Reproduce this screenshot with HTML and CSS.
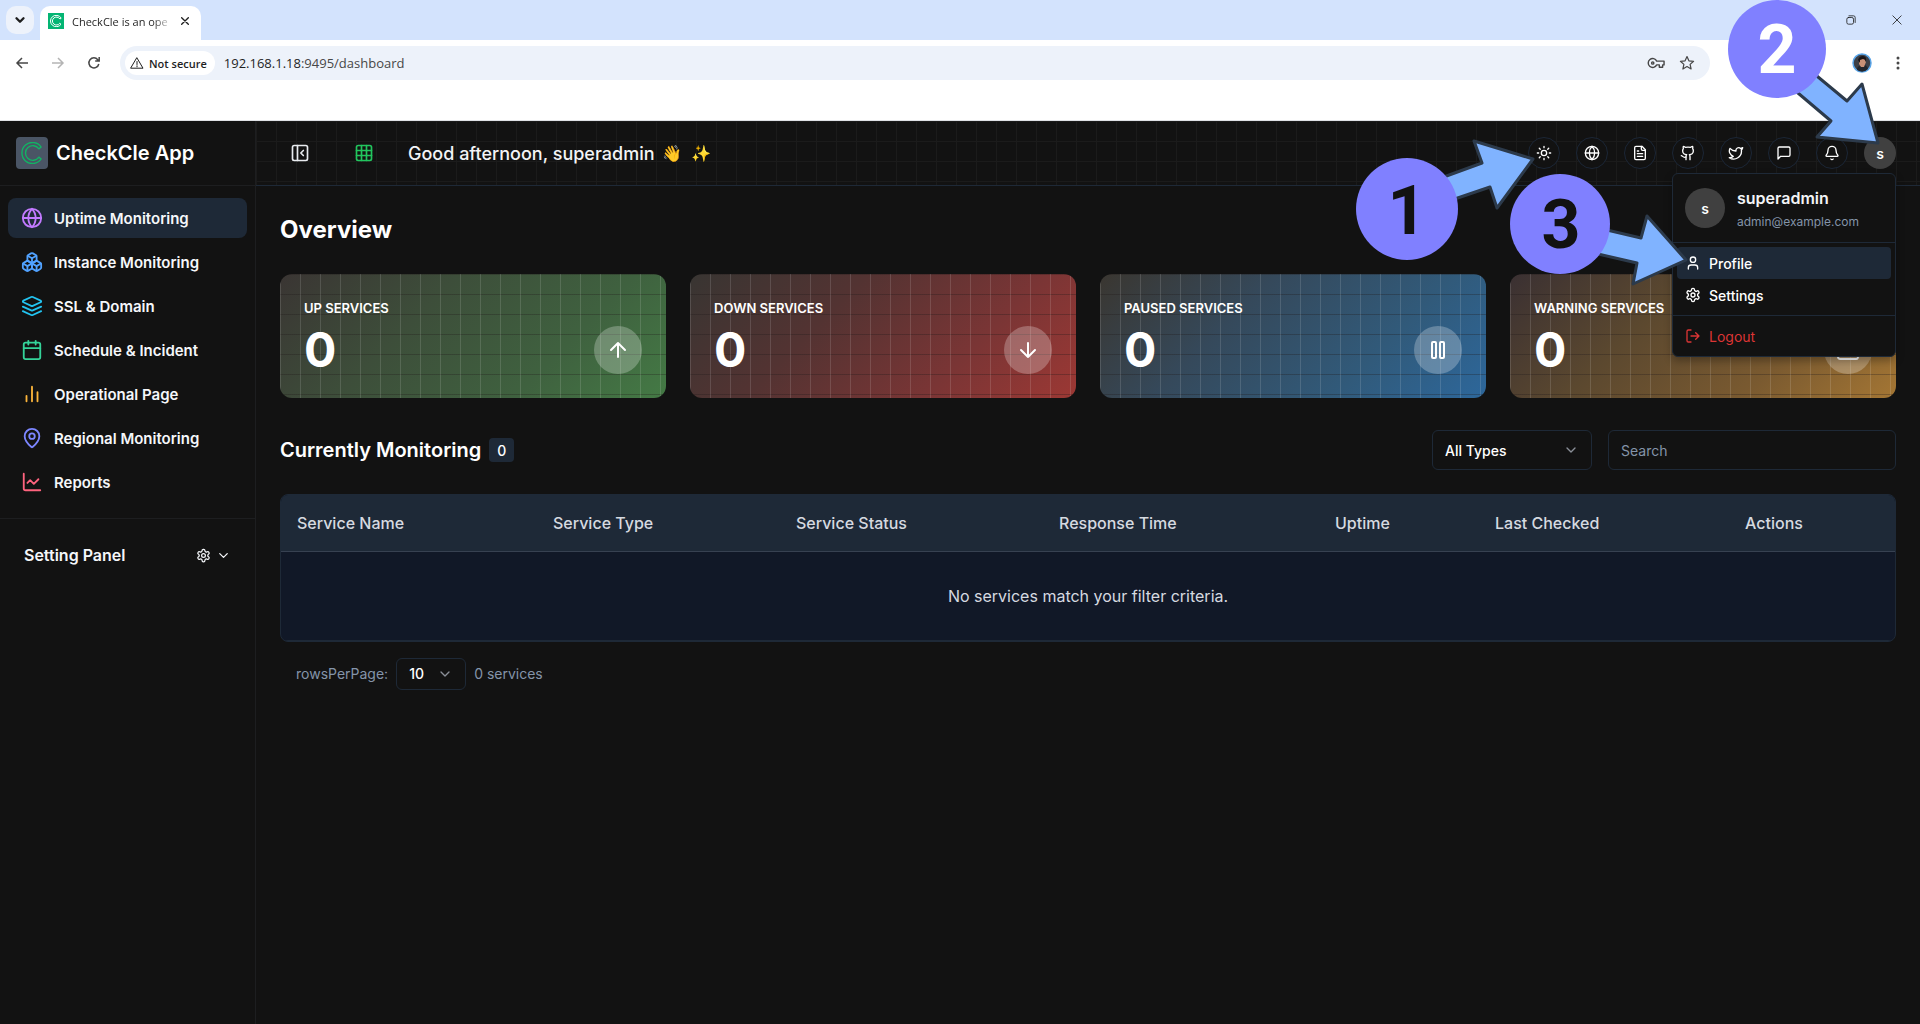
FILE: index.html
```html
<!DOCTYPE html>
<html lang="en">
<head>
<meta charset="utf-8">
<title>CheckCle App</title>
<link rel="stylesheet" href="styles.css">
</head>
<body>
<svg class="defs" aria-hidden="true">
  <symbol id="i-globe" viewBox="0 0 24 24"><circle cx="12" cy="12" r="10"/><path d="M12 2a14.5 14.5 0 0 0 0 20 14.5 14.5 0 0 0 0-20M2 12h20"/></symbol>
  <symbol id="i-boxes" viewBox="0 0 24 24"><path d="M2.97 12.92A2 2 0 0 0 2 14.63v3.24a2 2 0 0 0 .97 1.71l3 1.8a2 2 0 0 0 2.06 0L12 19v-5.5l-5-3-4.03 2.42Z"/><path d="m7 16.5-4.74-2.85M7 16.5l5-3M7 16.5v5.17"/><path d="M12 13.5V19l3.97 2.38a2 2 0 0 0 2.06 0l3-1.8a2 2 0 0 0 .97-1.71v-3.24a2 2 0 0 0-.97-1.71L17 10.5l-5 3Z"/><path d="m17 16.5-5-3M17 16.5l4.74-2.85M17 16.5v5.17"/><path d="M7.97 4.42A2 2 0 0 0 7 6.13v4.37l5 3 5-3V6.13a2 2 0 0 0-.97-1.71l-3-1.8a2 2 0 0 0-2.06 0l-3 1.8Z"/><path d="M12 8 7.26 5.15M12 8l4.74-2.85M12 13.5V8"/></symbol>
  <symbol id="i-layers" viewBox="0 0 24 24"><path d="M12.83 2.18a2 2 0 0 0-1.66 0L2.6 6.08a1 1 0 0 0 0 1.83l8.58 3.91a2 2 0 0 0 1.66 0l8.58-3.9a1 1 0 0 0 0-1.83Z"/><path d="m22 17.65-9.17 4.16a2 2 0 0 1-1.66 0L2 17.65"/><path d="m22 12.65-9.17 4.16a2 2 0 0 1-1.66 0L2 12.65"/></symbol>
  <symbol id="i-calendar" viewBox="0 0 24 24"><path d="M8 2v4M16 2v4M3 10h18"/><rect x="3" y="4" width="18" height="18" rx="2"/></symbol>
  <symbol id="i-bars" viewBox="0 0 24 24"><path d="M18 20V10M12 20V4M6 20v-6"/></symbol>
  <symbol id="i-pin" viewBox="0 0 24 24"><path d="M20 10c0 4.993-5.539 10.193-7.399 11.799a1 1 0 0 1-1.202 0C9.539 20.193 4 14.993 4 10a8 8 0 0 1 16 0"/><circle cx="12" cy="10" r="3"/></symbol>
  <symbol id="i-line" viewBox="0 0 24 24"><path d="M3 3v16a2 2 0 0 0 2 2h16"/><path d="m19 9-5 5-4-4-3 3"/></symbol>
  <symbol id="i-gear" viewBox="0 0 24 24"><path d="M12.22 2h-.44a2 2 0 0 0-2 2v.18a2 2 0 0 1-1 1.73l-.43.25a2 2 0 0 1-2 0l-.15-.08a2 2 0 0 0-2.73.73l-.22.38a2 2 0 0 0 .73 2.73l.15.1a2 2 0 0 1 1 1.72v.51a2 2 0 0 1-1 1.74l-.15.09a2 2 0 0 0-.73 2.73l.22.38a2 2 0 0 0 2.73.73l.15-.08a2 2 0 0 1 2 0l.43.25a2 2 0 0 1 1 1.73V20a2 2 0 0 0 2 2h.44a2 2 0 0 0 2-2v-.18a2 2 0 0 1 1-1.73l.43-.25a2 2 0 0 1 2 0l.15.08a2 2 0 0 0 2.73-.73l.22-.39a2 2 0 0 0-.73-2.73l-.15-.08a2 2 0 0 1-1-1.74v-.5a2 2 0 0 1 1-1.74l.15-.09a2 2 0 0 0 .73-2.73l-.22-.38a2 2 0 0 0-2.73-.73l-.15.08a2 2 0 0 1-2 0l-.43-.25a2 2 0 0 1-1-1.73V4a2 2 0 0 0-2-2z"/><circle cx="12" cy="12" r="3"/></symbol>
  <symbol id="i-chevron" viewBox="0 0 24 24"><path d="m6 9 6 6 6-6"/></symbol>
  <symbol id="i-panel" viewBox="0 0 24 24"><rect x="3" y="3" width="18" height="18" rx="2"/><path d="M9 3v18M16 15l-3-3 3-3"/></symbol>
  <symbol id="i-grid" viewBox="0 0 24 24"><rect x="3" y="3" width="18" height="18" rx="2"/><path d="M3 9h18M3 15h18M9 3v18M15 3v18"/></symbol>
  <symbol id="i-sun" viewBox="0 0 24 24"><circle cx="12" cy="12" r="4"/><path d="M12 2v2M12 20v2M4.93 4.93l1.41 1.41M17.66 17.66l1.41 1.41M2 12h2M20 12h2M6.34 17.66l-1.41 1.41M19.07 4.93l-1.41 1.41"/></symbol>
  <symbol id="i-file" viewBox="0 0 24 24"><path d="M15 2H6a2 2 0 0 0-2 2v16a2 2 0 0 0 2 2h12a2 2 0 0 0 2-2V7Z"/><path d="M14 2v4a2 2 0 0 0 2 2h4M10 9H8M16 13H8M16 17H8"/></symbol>
  <symbol id="i-github" viewBox="0 0 24 24"><path d="M15 22v-4a4.8 4.8 0 0 0-1-3.5c3 0 6-2 6-5.5.08-1.25-.27-2.48-1-3.5.28-1.15.28-2.35 0-3.5 0 0-1 0-3 1.5-2.64-.5-5.36-.5-8 0C6 2 5 2 5 2c-.3 1.15-.3 2.35 0 3.5A5.403 5.403 0 0 0 4 9c0 3.5 3 5.5 6 5.5-.39.49-.68 1.05-.85 1.65-.17.6-.22 1.23-.15 1.85v4"/><path d="M9 18c-4.51 2-5-2-7-2"/></symbol>
  <symbol id="i-twitter" viewBox="0 0 24 24"><path d="M22 4s-.7 2.1-2 3.4c1.6 10-9.4 17.3-18 11.6 2.2.1 4.4-.6 6-2C3 15.5.5 9.6 3 5c2.2 2.6 5.6 4.1 9 4-.9-4.2 4-6.6 7-3.8 1.1 0 3-1.2 3-1.2z"/></symbol>
  <symbol id="i-message" viewBox="0 0 24 24"><path d="M21 15a2 2 0 0 1-2 2H7l-4 4V5a2 2 0 0 1 2-2h14a2 2 0 0 1 2 2z"/></symbol>
  <symbol id="i-bell" viewBox="0 0 24 24"><path d="M10.268 21a2 2 0 0 0 3.464 0"/><path d="M3.262 15.326A1 1 0 0 0 4 17h16a1 1 0 0 0 .74-1.673C19.41 13.956 18 12.499 18 8A6 6 0 0 0 6 8c0 4.499-1.411 5.956-2.738 7.326"/></symbol>
  <symbol id="i-user" viewBox="0 0 24 24"><path d="M19 21v-2a4 4 0 0 0-4-4H9a4 4 0 0 0-4 4v2"/><circle cx="12" cy="7" r="4"/></symbol>
  <symbol id="i-logout" viewBox="0 0 24 24"><path d="M9 21H5a2 2 0 0 1-2-2V5a2 2 0 0 1 2-2h4M16 17l5-5-5-5M21 12H9"/></symbol>
  <symbol id="i-up" viewBox="0 0 24 24"><path d="m5 12 7-7 7 7M12 19V5"/></symbol>
  <symbol id="i-down" viewBox="0 0 24 24"><path d="M12 5v14M19 12l-7 7-7-7"/></symbol>
  <symbol id="i-pause" viewBox="0 0 24 24"><rect x="14" y="4" width="4" height="16" rx="1"/><rect x="6" y="4" width="4" height="16" rx="1"/></symbol>
  <symbol id="i-alert" viewBox="0 0 24 24"><path d="m21.73 18-8-14a2 2 0 0 0-3.48 0l-8 14A2 2 0 0 0 4 21h16a2 2 0 0 0 1.73-3M12 9v4M12 17h.01"/></symbol>
  <symbol id="i-close" viewBox="0 0 12 12"><path d="m1 1 10 10M11 1 1 11"/></symbol>
  <symbol id="i-logo" viewBox="0 0 24 24"><path d="M22 5.500A11.500 11.500 0 1 0 22 18.500L19.500 16.500A8 8 0 1 1 19.500 7.500Z"/></symbol>
</svg>

<div class="browser">
  <div class="tabstrip">
    <button class="tab-search" aria-label="Search tabs"><svg class="icon"><use href="#i-chevron"/></svg></button>
    <div class="tab">
      <span class="favicon"><svg class="icon"><use href="#i-logo"/></svg></span>
      <span class="tab-title">CheckCle is an ope</span>
      <button class="tab-close" aria-label="Close tab"><svg class="icon"><use href="#i-close"/></svg></button>
    </div>
    <div class="window-buttons">
      <button aria-label="Restore"><svg class="icon" viewBox="0 0 12 12"><rect x="1" y="3" width="8" height="8" rx="2"/><path d="M3.500 1H9a2 2 0 0 1 2 2v6"/></svg></button>
      <button aria-label="Close window"><svg class="icon"><use href="#i-close"/></svg></button>
    </div>
  </div>
  <div class="toolbar">
    <button aria-label="Back"><svg class="icon" viewBox="0 0 12 12"><path d="M12 6H1M6 1 1 6l5 5"/></svg></button>
    <button class="faded" aria-label="Forward"><svg class="icon" viewBox="0 0 12 12"><path d="M0 6h11M6 1l5 5-5 5"/></svg></button>
    <button aria-label="Reload"><svg class="icon" viewBox="0 0 12 12"><path d="M10.800 7A5 5 0 1 1 9.800 2.700L11.200 4M11.200 0v4h-4"/></svg></button>
    <div class="omnibox">
      <button class="not-secure"><svg class="icon" viewBox="0 0 14 12"><path d="M7 1 13 11.200H1ZM7 4.500v3M7 8.800v1"/></svg>Not secure</button>
      <span class="url"><span>192.168.1.18</span>:9495/dashboard</span>
      <svg class="icon key" viewBox="0 0 18 12"><path d="M9.200 4A4.700 4.700 0 1 0 9.200 8H12v2.500h3.500V8H17V4Z"/><circle cx="5" cy="6" r="1.200"/></svg>
      <svg class="icon star" viewBox="0 0 16 16"><path d="m8 1.500 1.900 4.300 4.700.5-3.500 3.100 1 4.600L8 11.600 3.900 14l1-4.600L1.400 6.300l4.700-.5Z"/></svg>
    </div>
    <svg class="profile" viewBox="0 0 20 20"><circle cx="10" cy="10" r="9" fill="#3d3f46" stroke="#5aa5e8" stroke-width="1.500"/><path d="M5 17q0-4 3-4l5-1q3 2 3 4-5 5-11 1Z" fill="#22252c"/><path d="M7 6q3-3 6 0l1 3-2 5H9L7 11Z" fill="#c99076"/><path d="M6 7q1-4 5-4 4 0 3 6-1-3-3-3L8 7v3Z" fill="#1b1617"/></svg>
    <button class="menu-dots" aria-label="Menu"><svg viewBox="0 0 4 16"><circle cx="2" cy="3" r="1.500"/><circle cx="2" cy="8" r="1.500"/><circle cx="2" cy="13" r="1.500"/></svg></button>
  </div>
  <div class="bookmarks"></div>
</div>

<div class="app">
  <aside class="sidebar">
    <div class="brand"><span class="brand-logo"><svg class="icon"><use href="#i-logo"/></svg></span><span>CheckCle App</span></div>
    <nav class="nav">
      <a class="active purple" href="#"><svg class="icon"><use href="#i-globe"/></svg><span>Uptime Monitoring</span></a>
      <a class="blue" href="#"><svg class="icon"><use href="#i-boxes"/></svg><span>Instance Monitoring</span></a>
      <a class="cyan" href="#"><svg class="icon"><use href="#i-layers"/></svg><span>SSL &amp; Domain</span></a>
      <a class="green" href="#"><svg class="icon"><use href="#i-calendar"/></svg><span>Schedule &amp; Incident</span></a>
      <a class="amber" href="#"><svg class="icon"><use href="#i-bars"/></svg><span>Operational Page</span></a>
      <a class="indigo" href="#"><svg class="icon"><use href="#i-pin"/></svg><span>Regional Monitoring</span></a>
      <a class="rose" href="#"><svg class="icon"><use href="#i-line"/></svg><span>Reports</span></a>
    </nav>
    <button class="setting-panel"><span>Setting Panel</span><svg class="icon"><use href="#i-gear"/></svg><svg class="icon"><use href="#i-chevron"/></svg></button>
  </aside>

  <div class="content">
    <header class="header">
      <button class="plain" aria-label="Collapse sidebar"><svg class="icon"><use href="#i-panel"/></svg></button>
      <button class="plain lime" aria-label="Toggle grid"><svg class="icon"><use href="#i-grid"/></svg></button>
      <div class="greeting"><span>Good afternoon, superadmin</span><span>👋</span><span>✨</span></div>
      <div class="actions">
        <button aria-label="Theme"><svg class="icon"><use href="#i-sun"/></svg></button>
        <button aria-label="Language"><svg class="icon"><use href="#i-globe"/></svg></button>
        <button aria-label="Docs"><svg class="icon"><use href="#i-file"/></svg></button>
        <button aria-label="GitHub"><svg class="icon"><use href="#i-github"/></svg></button>
        <button aria-label="Twitter"><svg class="icon"><use href="#i-twitter"/></svg></button>
        <button aria-label="Chat"><svg class="icon"><use href="#i-message"/></svg></button>
        <button aria-label="Notifications"><svg class="icon"><use href="#i-bell"/></svg></button>
        <button class="avatar">s</button>
        <div class="menu">
          <div class="menu-user">
            <span class="avatar large">s</span>
            <div class="menu-text"><div class="menu-name">superadmin</div><div class="menu-mail">admin@example.com</div></div>
          </div>
          <div class="menu-group">
            <button class="selected"><svg class="icon"><use href="#i-user"/></svg>Profile</button>
            <button><svg class="icon"><use href="#i-gear"/></svg>Settings</button>
          </div>
          <div class="menu-group">
            <button class="logout"><svg class="icon"><use href="#i-logout"/></svg>Logout</button>
          </div>
        </div>
      </div>
    </header>

    <main class="main">
      <h1>Overview</h1>
      <section class="stats">
        <article class="stat up"><h2>UP SERVICES</h2><div class="stat-row"><strong>0</strong><span class="stat-icon"><svg class="icon"><use href="#i-up"/></svg></span></div></article>
        <article class="stat down"><h2>DOWN SERVICES</h2><div class="stat-row"><strong>0</strong><span class="stat-icon"><svg class="icon"><use href="#i-down"/></svg></span></div></article>
        <article class="stat paused"><h2>PAUSED SERVICES</h2><div class="stat-row"><strong>0</strong><span class="stat-icon"><svg class="icon"><use href="#i-pause"/></svg></span></div></article>
        <article class="stat warning"><h2>WARNING SERVICES</h2><div class="stat-row"><strong>0</strong><span class="stat-icon"><svg class="icon"><use href="#i-alert"/></svg></span></div></article>
      </section>

      <div class="filters">
        <h2>Currently Monitoring</h2><span class="count">0</span>
        <div class="select type-select"><select aria-label="Service type"><option>All Types</option></select><svg class="icon"><use href="#i-chevron"/></svg></div>
        <input class="search" type="text" placeholder="Search" aria-label="Search">
      </div>

      <div class="table-frame">
        <table>
          <colgroup><col class="c-name"><col class="c-type"><col class="c-status"><col class="c-time"><col class="c-uptime"><col class="c-checked"><col class="c-actions"></colgroup>
          <thead><tr><th>Service Name</th><th>Service Type</th><th>Service Status</th><th>Response Time</th><th>Uptime</th><th>Last Checked</th><th class="center">Actions</th></tr></thead>
          <tbody><tr><td colspan="7">No services match your filter criteria.</td></tr></tbody>
        </table>
      </div>

      <div class="pager">
        <label for="rows">rowsPerPage:</label>
        <div class="select rows-select"><select id="rows"><option>10</option></select><svg class="icon"><use href="#i-chevron"/></svg></div>
        <span>0 services</span>
      </div>
    </main>
  </div>
</div>

<svg class="annotations" viewBox="1340 0 580 300">
  <g class="arrows">
    <path d="M1430 182 1482 163 1474 141 1533 159 1497 208 1490 187 1440 204Z"/>
    <path d="M1800 62 1847 101 1862 84 1878 143 1817 137 1831 121 1785 82Z"/>
    <path d="M1590 226 1641 238 1647 216 1686 260 1633 284 1637 263 1585 251Z"/>
  </g>
  <g class="discs"><circle cx="1407" cy="209" r="51"/><circle cx="1777" cy="49" r="49"/><circle cx="1560" cy="224" r="50"/></g>
  <g class="digits"><text x="1407" y="234">1</text><text class="light" x="1777" y="73">2</text><text x="1561" y="248">3</text></g>
</svg>
</body>
</html>
```
FILE: styles.css
```css
* { box-sizing: border-box; }
body {
  margin: 0;
  min-height: 100vh;
  display: flex;
  flex-direction: column;
  position: relative;
  background: #121212;
  color: #fff;
  font-family: Inter, "Liberation Sans", sans-serif;
  font-size: 14px;
}
h1, h2 { margin: 0; }
button {
  margin: 0;
  padding: 0;
  border: 0;
  background: none;
  color: inherit;
  font: inherit;
  display: flex;
  align-items: center;
  justify-content: center;
}
a { color: inherit; text-decoration: none; }
.defs { display: none; }
.icon {
  width: 16px;
  height: 16px;
  flex: none;
  fill: none;
  stroke: currentColor;
  stroke-width: 2;
  stroke-linecap: round;
  stroke-linejoin: round;
  overflow: visible;
}

/* Browser window */
.browser { background: #fff; color: #1f1f1f; font-family: "Open Sans", "Noto Sans", sans-serif; font-size: 12px; border-bottom: 1px solid #dfe1e5; }
.tabstrip { height: 40px; background: #d3e3fd; display: flex; align-items: center; padding-left: 6px; }
.tab-search { width: 28px; height: 28px; border-radius: 10px; background: #edf2fb; }
.tab-search .icon { stroke-width: 4; width: 14px; height: 14px; }
.tab {
  align-self: flex-end;
  width: 161px;
  height: 34px;
  margin-left: 6px;
  padding: 0 12px 4px 8px;
  display: flex;
  align-items: center;
  gap: 8px;
  background: #fff;
  border-radius: 10px 10px 0 0;
}
.favicon { width: 16px; height: 16px; background: #04b573; color: #fff; display: grid; place-items: center; flex: none; }
.favicon .icon { width: 12px; height: 12px; stroke-width: 2; }
.tab-title {
  flex: 1;
  white-space: nowrap;
  font-size: 11px;
  mask-image: linear-gradient(90deg, #000 80%, transparent);
}
.tab-close .icon { width: 8px; height: 8px; }
.window-buttons { margin-left: auto; display: flex; gap: 36px; padding-right: 18px; }
.window-buttons .icon { width: 10px; height: 10px; stroke-width: 1; }
.toolbar { height: 46px; display: flex; align-items: center; padding: 0 20px 0 16px; gap: 24px; color: #474747; }
.toolbar > button .icon { width: 12px; height: 12px; stroke-width: 1.5; stroke-linecap: butt; stroke-linejoin: miter; }
.faded { opacity: .4; }
.omnibox {
  flex: 1;
  height: 34px;
  margin: 0 104px 0 -4px;
  padding: 0 15px 0 5px;
  display: flex;
  align-items: center;
  gap: 9px;
  border-radius: 17px;
  background: #edf2fa;
}
.not-secure { height: 24px; padding: 0 8px 0 5px; gap: 5px; border-radius: 12px; background: #fff; color: #1f1f1f; font-weight: 600; font-size: 11px; }
.not-secure .icon { width: 14px; height: 12px; stroke-width: 1; }
.url { flex: 1; font-size: 13px; color: #474747; }
.url span { color: #1f1f1f; }
.key { width: 17px; height: 12px; stroke-width: 1.5; }
.star { width: 16px; height: 16px; stroke-width: 1.2; margin-left: 5px; }
.profile { width: 20px; height: 20px; flex: none; margin-left: 14px; }
.menu-dots svg { width: 4px; height: 16px; fill: #474747; }
.bookmarks { height: 34px; }

/* Application shell */
.app { flex: 1; display: flex; }
.sidebar { width: 256px; flex: none; border-right: 1px solid #1d1e20; }
.brand {
  height: 65px;
  padding: 0 16px;
  display: flex;
  align-items: center;
  gap: 8px;
  border-bottom: 1px solid #1d1e20;
  font-size: 20px;
  font-weight: 600;
}
.brand-logo { width: 32px; height: 32px; border-radius: 4px; background: #4a5565; color: #12b364; display: grid; place-items: center; }
.brand-logo .icon { width: 22px; height: 22px; stroke-width: 1.5; }
.nav { padding: 12px 8px; display: flex; flex-direction: column; gap: 4px; border-bottom: 1px solid #1d1e20; height: 333px; }
.nav a { height: 40px; padding-left: 13px; display: flex; align-items: center; gap: 11px; border-radius: 8px; font-size: 15px; font-weight: 600; }
.nav a span { color: #f5f7fa; }
.nav .icon { width: 22px; height: 22px; }
.active { background: #1e2937; }
.purple { color: #c27aff; }
.blue { color: #51a2ff; }
.cyan { color: #22c3f0; }
.green { color: #34d399; }
.amber { color: #fbb43a; }
.indigo { color: #7c86ff; }
.rose { color: #ff637e; }
.setting-panel { width: 100%; height: 72px; padding: 0 24px; gap: 5px; font-size: 16px; font-weight: 600; color: #f5f7fa; }
.setting-panel span { flex: 1; text-align: left; }
.setting-panel .icon { width: 15px; height: 15px; }

.content { flex: 1; min-width: 0; }
.header {
  height: 65px;
  display: flex;
  align-items: center;
  padding: 0 24px;
  border-bottom: 1px solid #1e2937;
  background-image: linear-gradient(90deg, #1b1b1b 1px, transparent 1px), linear-gradient(#1b1b1b 1px, transparent 1px);
  background-size: 20px 20px;
}
.plain { width: 40px; height: 40px; color: #e8ebef; }
.plain .icon { width: 20px; height: 20px; }
.lime { color: #22c55e; margin-left: 24px; }
.greeting { margin-left: 24px; display: flex; align-items: center; gap: 7px; font-size: 18px; font-weight: 500; color: #f3f4f6; }
.greeting span + span { font-size: 16px; width: 22px; }
.actions { margin-left: auto; display: flex; gap: 16px; position: relative; }
.actions > button { width: 32px; height: 32px; border: 1px solid #1b2636; border-radius: 50%; background: #121212; }
.actions > .avatar, .avatar { width: 32px; height: 32px; border: 0; border-radius: 50%; background: #404040; font-weight: 600; display: flex; align-items: center; justify-content: center; }
.avatar.large { width: 40px; height: 40px; }
.menu {
  position: absolute;
  z-index: 2;
  right: 0;
  top: 36px;
  width: 224px;
  border: 1px solid #1e2937;
  border-radius: 6px;
  background: #121212;
  box-shadow: 0 4px 8px rgba(0, 0, 0, .3);
}
.menu-user { height: 68px; padding: 0 12px; display: flex; align-items: center; gap: 12px; }
.menu-text { padding-top: 4px; }
.menu-name { font-size: 16px; font-weight: 600; line-height: 24px; color: #f3f4f6; }
.menu-mail { font-size: 12px; line-height: 24px; color: #8494a9; }
.menu-group { border-top: 1px solid #1e2937; padding: 4px; }
.menu-group button { width: 100%; height: 32px; padding: 0 8px; gap: 8px; justify-content: flex-start; border-radius: 4px; font-weight: 500; }
.menu-group .selected { background: #1e2937; }
.menu-group .logout { color: #dc3535; font-weight: 400; }

/* Dashboard */
.main { padding: 24px; display: flex; flex-direction: column; }
.main h1 { font-size: 24px; line-height: 40px; font-weight: 700; }
.stats { margin-top: 24px; display: grid; grid-template-columns: repeat(4, 1fr); gap: 24px; }
.stat {
  height: 124px;
  padding: 24px;
  display: flex;
  flex-direction: column;
  justify-content: space-between;
  border-radius: 12px;
  background-size: 20px 20px, 20px 20px, 100% 100%;
  --grid-x: linear-gradient(90deg, rgba(255, 255, 255, .13) 1px, transparent 1px);
  --grid-y: linear-gradient(rgba(32, 24, 24, .3) 1px, transparent 1px);
}
.stat h2 { font-size: 13px; line-height: 20px; font-weight: 600; }
.stat-row { display: flex; align-items: center; justify-content: space-between; height: 48px; }
.stat strong { font-size: 48px; line-height: 48px; font-weight: 700; }
.stat-icon { width: 48px; height: 48px; border-radius: 50%; background: rgba(255, 255, 255, .25); display: grid; place-items: center; }
.stat-icon .icon { width: 24px; height: 24px; }
.up { background-image: var(--grid-x), var(--grid-y), linear-gradient(135deg, #3a3533, #3d4e3a 35%, #3f613f 70%, #447a45); }
.down { background-image: var(--grid-x), var(--grid-y), linear-gradient(135deg, #383532, #533332 35%, #7a3535 70%, #9c3834); }
.paused { background-image: var(--grid-x), var(--grid-y), linear-gradient(135deg, #3a3630, #35495b 35%, #315a7a 70%, #2d679b); }
.warning { background-image: var(--grid-x), var(--grid-y), linear-gradient(135deg, #3a3032, #5b482f 35%, #7a5a30 70%, #a47634); }

.filters { margin-top: 32px; display: flex; align-items: center; gap: 8px; }
.filters h2 { font-size: 20px; font-weight: 600; }
.count { width: 25px; height: 24px; border-radius: 4px; background: #1e2937; display: grid; place-items: center; font-weight: 500; }
.select { display: grid; align-items: center; }
.select select {
  grid-area: 1 / 1;
  appearance: none;
  height: 40px;
  width: 100%;
  padding: 0 12px;
  border: 1px solid #1e2937;
  border-radius: 6px;
  background: #121212;
  color: #fff;
  font: 500 14px Inter, sans-serif;
}
.select .icon { grid-area: 1 / 1; justify-self: end; margin-right: 13px; color: #8a8f98; pointer-events: none; }
.type-select { width: 160px; margin-left: auto; }
.search { width: 288px; height: 40px; margin-left: 8px; padding: 0 12px; border: 1px solid #1e2937; border-radius: 6px; background: transparent; color: #fff; font: 14px Inter, sans-serif; }
.search::placeholder { color: #8494a9; }
.table-frame { margin-top: 24px; border: 1px solid #1e2937; border-radius: 8px; overflow: hidden; background: #111827; }
table { width: 100%; border-collapse: collapse; font-size: 16px; color: #d6dae0; }
thead { background: #1e2937; }
th { height: 56px; padding: 0 16px; text-align: left; font-weight: 500; border-bottom: 1px solid #374151; }
.center { text-align: center; }
td { height: 89px; text-align: center; border-bottom: 1px solid #1e2937; }
.c-name { width: 256px; }
.c-type { width: 243px; }
.c-status { width: 263px; }
.c-time { width: 276px; }
.c-uptime { width: 160px; }
.c-checked { width: 174px; }
.c-actions { width: 242px; }
.pager { margin-top: 16px; padding-left: 16px; display: flex; align-items: center; gap: 8px; color: #8494a9; }
.rows-select { width: 70px; }
.rows-select select { height: 32px; }

/* Numbered step markers */
.annotations { position: absolute; z-index: 3; top: 0; right: 0; width: 580px; height: 300px; pointer-events: none; }
.arrows { fill: #80b3ff; stroke: #2c3a4b; stroke-width: 3; stroke-linejoin: round; }
.discs { fill: #8080ff; }
.digits { font: 700 68px Roboto, sans-serif; text-anchor: middle; fill: #121212; }
.light { fill: #fff; }
```
